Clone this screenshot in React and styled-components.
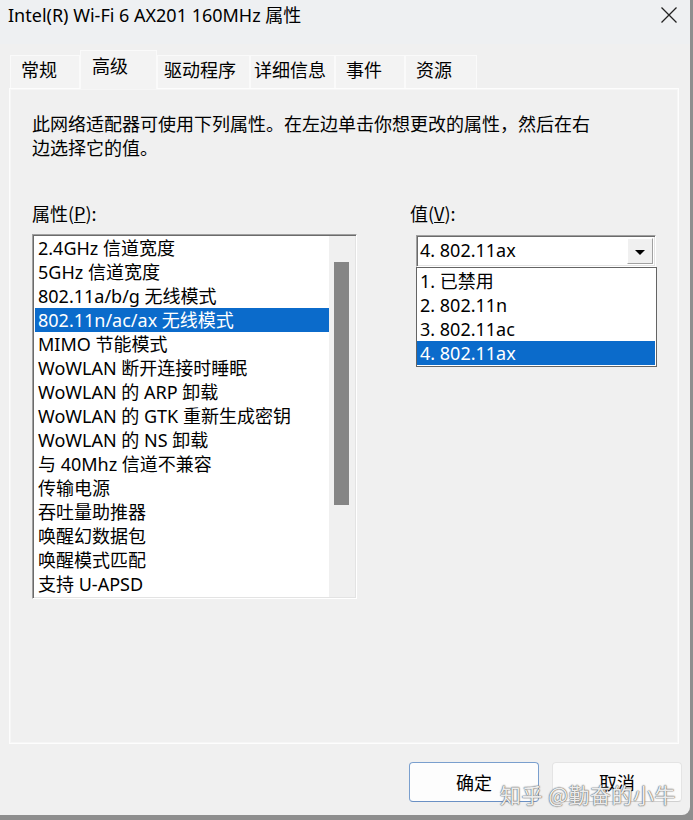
import React from 'react';
import styled, { createGlobalStyle } from 'styled-components';

const GlobalStyle = createGlobalStyle`
  html, body {
    margin: 0;
    padding: 0;
  }
  body {
    background: #8e8e8e;
    font-family: "Noto Sans", "Noto Sans CJK SC", sans-serif;
    color: #000;
  }
`;

const Backdrop = styled.div`
  width: 693px;
  height: 820px;
  background: #8e8e8e;
`;

const Window = styled.div`
  position: relative;
  width: 690px;
  height: 815px;
  background: #f0f0f0;
  border-bottom-right-radius: 8px;
  display: flex;
  flex-direction: column;
  overflow: hidden;
`;

const TitleBar = styled.div`
  height: 44px;
  display: flex;
  justify-content: space-between;
  align-items: flex-start;
  padding: 0 12px 0 8px;
  background: #eef0f2;
`;

const Title = styled.span`
  font-size: 18px;
  line-height: 30px;
`;

const Close = styled.div`
  margin-top: 6px;
  width: 18px;
  height: 18px;
`;

const TabRow = styled.div`
  height: 44px;
  display: flex;
  align-items: flex-end;
  padding-left: 10px;
  position: relative;
  z-index: 1;
`;

const Tab = styled.div`
  box-sizing: border-box;
  width: ${p => p.$w}px;
  height: ${p => (p.$active ? 39 : 33)}px;
  margin-bottom: ${p => (p.$active ? -1 : 0)}px;
  padding: ${p => (p.$active ? 2 : 1)}px 0 0 ${p => p.$pad}px;
  font-family: "Noto Sans CJK SC", sans-serif;
  font-size: 18px;
  line-height: 24px;
  background: #f3f3f3;
  border: 1px solid #fafafa;
  border-bottom: none;
`;

const Panel = styled.div`
  margin: 0 11px 0 9px;
  height: 656px;
  box-sizing: border-box;
  border: 1px solid #fdfdfd;
  box-shadow: inset 0 0 0 1px #f6f6f6;
  padding: 22px 20px 0 22px;
`;

const Desc = styled.p`
  margin: 0;
  font-family: "Noto Sans CJK SC", sans-serif;
  font-size: 18px;
  line-height: 24px;
  width: 570px;
`;

const Columns = styled.div`
  display: flex;
  margin-top: 42px;
`;

const LeftCol = styled.div`
  width: 325px;
`;

const RightCol = styled.div`
  margin-left: 53px;
`;

const Label = styled.div`
  font-family: "Noto Sans CJK SC", sans-serif;
  font-size: 18px;
  line-height: 24px;
`;

const ListBox = styled.div`
  box-sizing: border-box;
  margin-top: 9px;
  width: 325px;
  height: 365px;
  background: #fff;
  border: 1px solid;
  border-color: #a0a0a0 #ffffff #ffffff #a0a0a0;
  box-shadow: inset 1px 1px 0 #6b6b6b, inset -1px -1px 0 #e3e3e3;
  padding: 1px;
  display: flex;
`;

const Items = styled.div`
  flex: 1;
  padding-left: 1px;
`;

const Item = styled.div`
  height: 24px;
  line-height: 24px;
  padding-left: 3px;
  font-size: 18px;
  white-space: nowrap;
  background: ${p => (p.$selected ? '#0b6bcb' : 'transparent')};
  color: ${p => (p.$selected ? '#fff' : '#000')};
`;

const ScrollTrack = styled.div`
  width: 26px;
  background: #f0f0f0;
  padding-top: 26px;
  box-sizing: border-box;
`;

const Thumb = styled.div`
  width: 15px;
  height: 243px;
  margin-left: 5px;
  background: #858585;
`;

const ComboWrap = styled.div`
  margin: 10px 0 0 6px;
  width: 241px;
`;

const Combo = styled.div`
  box-sizing: border-box;
  width: 240px;
  height: 32px;
  background: #fff;
  border: 1px solid;
  border-color: #a0a0a0 #ffffff #ffffff #a0a0a0;
  box-shadow: inset 1px 1px 0 #6b6b6b, inset -1px -1px 0 #e3e3e3;
  display: flex;
  align-items: center;
  justify-content: space-between;
  padding: 1px 2px 1px 3px;
  font-size: 18px;
  line-height: 24px;
`;

const ComboText = styled.span`
  margin-top: -3px;
`;

const DropButton = styled.div`
  box-sizing: border-box;
  width: 26px;
  height: 26px;
  background: #f0f0f0;
  border: 1px solid;
  border-color: #ffffff #a0a0a0 #a0a0a0 #ffffff;
  display: flex;
  align-items: center;
  justify-content: center;
`;

const Arrow = styled.div`
  width: 0;
  height: 0;
  border-left: 5px solid transparent;
  border-right: 5px solid transparent;
  border-top: 5px solid #000;
  margin-top: 2px;
`;

const DropList = styled.div`
  box-sizing: border-box;
  width: 241px;
  border: 1px solid #646464;
  background: #fff;
  padding: 1px 1px 1px 0;
`;

const Footer = styled.div`
  flex: 1;
  display: flex;
  justify-content: flex-end;
  align-items: flex-start;
  gap: 13px;
  padding: 18px 8px 0 0;
`;

const Button = styled.button`
  width: 130px;
  height: 40px;
  border-radius: 4px;
  font-family: "Noto Sans CJK SC", sans-serif;
  font-size: 18px;
  color: #000;
  background: ${p => (p.$primary ? '#fdfdfd' : '#fbfbfb')};
  border: 1px solid ${p => (p.$primary ? '#7a9fce' : '#e4e4e4')};
  border-bottom-color: ${p => (p.$primary ? '#6a90c4' : '#d0d0d0')};
`;

const Watermark = styled.div`
  position: absolute;
  right: 14px;
  bottom: 6px;
  font-family: "Noto Sans CJK SC", sans-serif;
  font-size: 21px;
  letter-spacing: 0.5px;
  color: rgba(255, 255, 255, 0.9);
  text-shadow: 0 0 1px #666, 0 0 1px #666, 0 0 2px #999;
  pointer-events: none;
`;

const tabs = [
  { label: '常规', w: 70, pad: 10 },
  { label: '高级', w: 77, pad: 11, active: true },
  { label: '驱动程序', w: 93, pad: 6 },
  { label: '详细信息', w: 85, pad: 3 },
  { label: '事件', w: 70, pad: 10 },
  { label: '资源', w: 72, pad: 10 },
];

const properties = [
  '2.4GHz 信道宽度',
  '5GHz 信道宽度',
  '802.11a/b/g 无线模式',
  '802.11n/ac/ax 无线模式',
  'MIMO 节能模式',
  'WoWLAN 断开连接时睡眠',
  'WoWLAN 的 ARP 卸载',
  'WoWLAN 的 GTK 重新生成密钥',
  'WoWLAN 的 NS 卸载',
  '与 40Mhz 信道不兼容',
  '传输电源',
  '吞吐量助推器',
  '唤醒幻数据包',
  '唤醒模式匹配',
  '支持 U-APSD',
];

const values = ['1. 已禁用', '2. 802.11n', '3. 802.11ac', '4. 802.11ax'];

export default function App() {
  return (
    <Backdrop>
      <GlobalStyle />
      <Window>
        <TitleBar>
          <Title>Intel(R) Wi-Fi 6 AX201 160MHz 属性</Title>
          <Close>
            <svg width="18" height="18" viewBox="0 0 18 18">
              <path d="M1.5 1.5 L16.5 16.5 M16.5 1.5 L1.5 16.5" stroke="#222" strokeWidth="1.3" fill="none" />
            </svg>
          </Close>
        </TitleBar>

        <TabRow>
          {tabs.map(t => (
            <Tab key={t.label} $w={t.w} $pad={t.pad} $active={t.active}>{t.label}</Tab>
          ))}
        </TabRow>

        <Panel>
          <Desc>此网络适配器可使用下列属性。在左边单击你想更改的属性，然后在右边选择它的值。</Desc>
          <Columns>
            <LeftCol>
              <Label>属性(<u>P</u>):</Label>
              <ListBox>
                <Items>
                  {properties.map((p, i) => (
                    <Item key={p} $selected={i === 3}>{p}</Item>
                  ))}
                </Items>
                <ScrollTrack>
                  <Thumb />
                </ScrollTrack>
              </ListBox>
            </LeftCol>
            <RightCol>
              <Label>值(<u>V</u>):</Label>
              <ComboWrap>
                <Combo>
                  <ComboText>4. 802.11ax</ComboText>
                  <DropButton><Arrow /></DropButton>
                </Combo>
                <DropList>
                  {values.map((v, i) => (
                    <Item key={v} $selected={i === 3}>{v}</Item>
                  ))}
                </DropList>
              </ComboWrap>
            </RightCol>
          </Columns>
        </Panel>

        <Footer>
          <Button $primary>确定</Button>
          <Button>取消</Button>
        </Footer>
        <Watermark>知乎 @勤奋的小牛</Watermark>
      </Window>
    </Backdrop>
  );
}
